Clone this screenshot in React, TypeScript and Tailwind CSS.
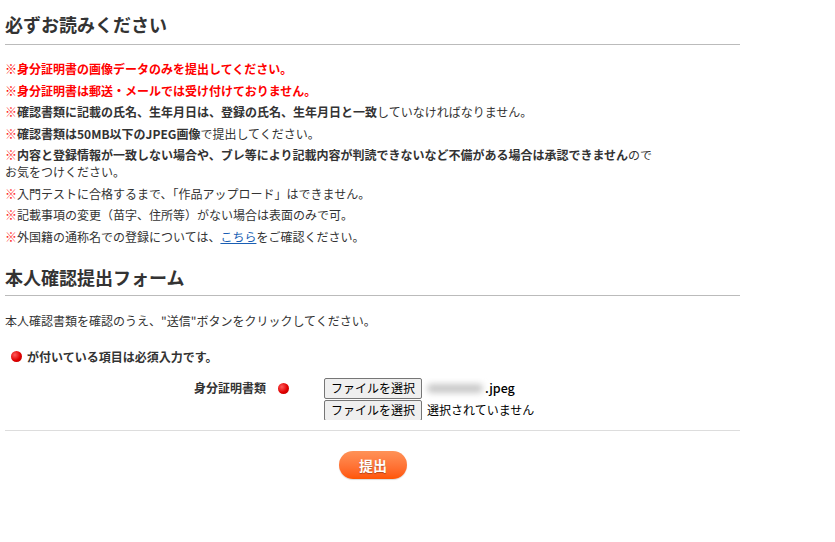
import React from 'react';

const Dot = () => (
    <span className="inline-block w-[11px] h-[11px] rounded-full bg-[radial-gradient(circle_at_35%_35%,#ff5a5a_0%,#e00000_55%,#b00000_100%)]" />
);

const Note = ({ children }: { children: React.ReactNode }) => (
    <p className="leading-[17px]">
        <span className="text-[#ff2a2a]">※</span>
        {children}
    </p>
);

const FileField = ({ fileName }: { fileName?: boolean }) => (
    <div className="flex items-center h-[21px] mb-[1px]">
        <span className="h-[21px] px-[6px] flex items-center bg-[#efefef] border border-[#767676] rounded-[2px] text-[12px] text-black leading-none">
            ファイルを選択
        </span>
        {fileName ? (
            <span className="flex items-center ml-[5px] text-[12.5px] text-black font-medium">
                <span className="inline-block w-[56px] h-[9px] rounded-full bg-[#c8c8c8] blur-[3px]" />
                <span className="ml-[2px]">.jpeg</span>
            </span>
        ) : (
            <span className="ml-[5px] text-[12px] text-black">選択されていません</span>
        )}
    </div>
);

export default function App() {
    return (
        <div className="min-h-[542px] bg-white text-[#333] text-[12px] font-['Noto_Sans_CJK_JP','Noto_Sans',sans-serif]">
            <div className="ml-[5px] w-[735px]">
                {/* 必ずお読みください */}
                <h2 className="pt-[12px] text-[18px] font-bold leading-[24px]">必ずお読みください</h2>
                <div className="mt-[8px] border-t border-[#bbb]" />

                <div className="mt-[15px] flex flex-col gap-[4.5px]">
                    <p className="leading-[17px] text-[#ff0000] font-bold">※身分証明書の画像データのみを提出してください。</p>
                    <p className="leading-[17px] text-[#ff0000] font-bold">※身分証明書は郵送・メールでは受け付けておりません。</p>
                    <Note>
                        <b>確認書類に記載の氏名、生年月日は、登録の氏名、生年月日と一致</b>していなければなりません。
                    </Note>
                    <Note>
                        <b>確認書類は50MB以下のJPEG画像</b>で提出してください。
                    </Note>
                    <Note>
                        <b>内容と登録情報が一致しない場合や、ブレ等により記載内容が判読できないなど不備がある場合は承認できません</b>ので
                        <br />
                        お気をつけください。
                    </Note>
                    <Note>入門テストに合格するまで、「作品アップロード」はできません。</Note>
                    <Note>記載事項の変更（苗字、住所等）がない場合は表面のみで可。</Note>
                    <Note>
                        外国籍の通称名での登録については、
                        <a href="#" className="text-[#1a5fb4] underline">こちら</a>
                        をご確認ください。
                    </Note>
                </div>

                {/* 本人確認提出フォーム */}
                <h2 className="mt-[20.5px] text-[18px] font-bold leading-[24px]">本人確認提出フォーム</h2>
                <div className="mt-[6px] border-t border-[#bbb]" />

                <p className="mt-[16px] leading-[17px]">本人確認書類を確認のうえ、"送信"ボタンをクリックしてください。</p>

                <p className="mt-[19px] ml-[6px] flex items-center gap-[5px] leading-[17px] font-bold">
                    <Dot />
                    が付いている項目は必須入力です。
                </p>

                <div className="mt-[12.5px] flex items-start">
                    <div className="w-[261px] h-[21px] flex items-center justify-end font-bold">身分証明書類</div>
                    <div className="w-[58px] h-[21px] flex items-center pl-[12px]">
                        <Dot />
                    </div>
                    <div className="h-[42px] overflow-hidden">
                        <FileField fileName />
                        <FileField />
                    </div>
                </div>

                <div className="mt-[10px] border-t border-[#ddd]" />

                <div className="mt-[20px] flex justify-center">
                    <button className="ml-[1px] w-[68px] h-[28px] rounded-full bg-gradient-to-b from-[#ff9257] to-[#ff5500] text-white text-[14px] font-bold leading-none shadow-[0_1px_1px_rgba(0,0,0,0.15)] [text-shadow:0_1px_1px_rgba(0,0,0,0.3)]">
                        提出
                    </button>
                </div>
            </div>
        </div>
    );
}
